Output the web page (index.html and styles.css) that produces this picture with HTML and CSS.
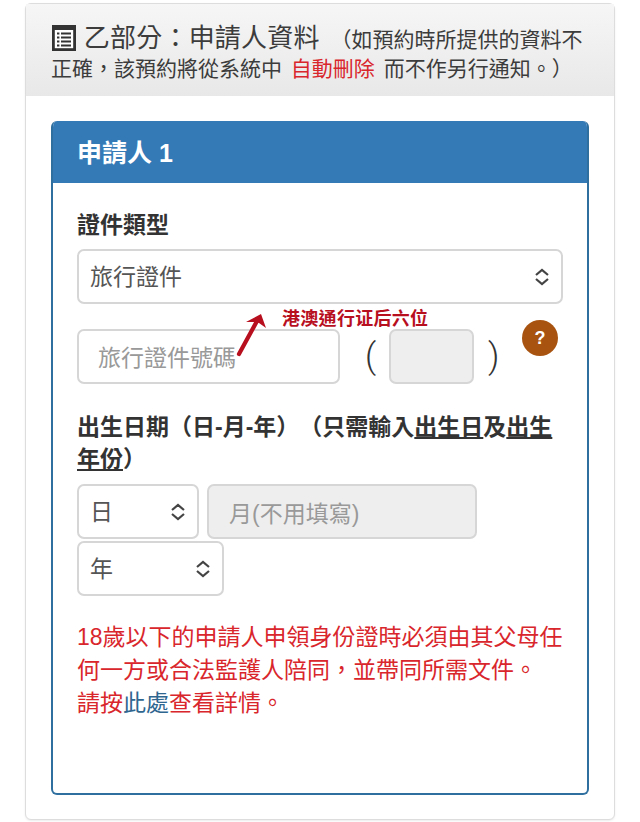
FILE: index.html
```html
<!DOCTYPE html>
<html lang="zh-Hant">
<head>
  <meta charset="UTF-8">
  <meta name="viewport" content="width=device-width, initial-scale=1.0">
  <title>申請人資料</title>
  <link rel="stylesheet" href="styles.css">
</head>
<body>
  <div class="section">
    <!-- 乙部分 heading -->
    <div class="section-head">
      <svg class="list-icon" viewBox="0 0 24 26" aria-hidden="true">
        <rect x="1.4" y="1.4" width="21.2" height="23.2" fill="#fff" stroke="#333" stroke-width="2.8"/>
        <rect x="1" y="1" width="22" height="4" fill="#333"/>
        <path d="M5 8.5h2.4M9 8.5h10M5 12.5h2.4M9 12.5h10M5 16.5h2.4M9 16.5h10M5 20.5h2.4M9 20.5h10" stroke="#333" stroke-width="1.8" fill="none"/>
      </svg>
      <span class="section-title">乙部分：申請人資料</span>
      <span class="section-note">（如預約時所提供的資料不正確，該預約將從系統中 <span class="warn">自動刪除</span> 而不作另行通知。）</span>
    </div>

    <!-- 申請人 panel -->
    <div class="panel">
      <div class="panel-head">申請人 1</div>
      <div class="panel-body">
        <div class="field-label">證件類型</div>
        <div class="control select full">
          <span>旅行證件</span>
          <svg class="updown" viewBox="0 0 16 18" aria-hidden="true"><path d="M2 7l6-5 6 5M2 11l6 5 6-5"/></svg>
        </div>

        <div class="id-row">
          <input class="control id-input" type="text" placeholder="旅行證件號碼">
          <span class="paren open">(</span>
          <input class="control check-digit" type="text" disabled>
          <span class="paren close">)</span>
          <span class="help">?</span>
        </div>

        <!-- annotation drawn on top of the screenshot -->
        <span class="note-text">港澳通行证后六位</span>
        <svg class="note-arrow" viewBox="0 0 36 50" aria-hidden="true">
          <path d="M5 45L23 12" stroke="#b80f1f" stroke-width="4.2" stroke-linecap="round" fill="none"/>
          <path d="M27 5L12 13l8 0 5 1 7 5z" fill="#b80f1f"/>
        </svg>

        <div class="field-label date-label">出生日期（日-月-年）（只需輸入<u>出生日</u>及<u>出生年份</u>）</div>
        <div class="date-row">
          <div class="control select day">
            <span>日</span>
            <svg class="updown" viewBox="0 0 16 18" aria-hidden="true"><path d="M2 7l6-5 6 5M2 11l6 5 6-5"/></svg>
          </div>
          <input class="control month" type="text" placeholder="月(不用填寫)" disabled>
          <div class="control select year">
            <span>年</span>
            <svg class="updown" viewBox="0 0 16 18" aria-hidden="true"><path d="M2 7l6-5 6 5M2 11l6 5 6-5"/></svg>
          </div>
        </div>

        <p class="notice">18歲以下的申請人申領身份證時必須由其父母任何一方或合法監護人陪同，並帶同所需文件。<br>請按<a href="#">此處</a>查看詳情。</p>
      </div>
    </div>
  </div>
</body>
</html>
```

FILE: styles.css
```css
* {
  box-sizing: border-box;
}

body {
  font-family: "Liberation Sans", "Noto Sans CJK SC", "Noto Sans CJK TC", sans-serif;
  margin: 0;
  padding: 3px 25px 2px;
  background: #fff;
  color: #333;
  height: 822px;
  overflow: hidden;
  text-spacing-trim: space-all;
}

.section {
  height: 817px;
  border: 1px solid #ddd;
  border-radius: 6px;
  box-shadow: 0 1px 2px rgba(0, 0, 0, 0.08);
  background: #fff;
}

.section-head {
  height: 92px;
  padding: 21px 25px 0;
  background: linear-gradient(#f6f6f6, #e8e8e8);
  font-size: 21px;
  line-height: 29px;
  color: #3c3c3c;
}

.list-icon {
  width: 24px;
  height: 26px;
  vertical-align: -4px;
  margin: 0 2px 0 1px;
}

.section-title {
  font-size: 26px;
  line-height: 26px;
  letter-spacing: 0.2px;
}

.section-note {
  margin-left: 5px;
  word-spacing: 3px;
}

.warn {
  color: #d9262c;
}

.panel {
  height: 674px;
  margin: 25px 25px 0;
  border: 2px solid #2f6f9f;
  border-top: 0;
  border-radius: 6px;
  overflow: hidden;
}

.panel-head {
  height: 62px;
  margin: 0 -2px;
  padding: 0 26px;
  background: #337ab7;
  color: #fff;
  font-size: 25px;
  font-weight: bold;
  line-height: 65px;
}

.panel-body {
  position: relative;
  padding: 26px 24px 0;
}

.field-label {
  font-size: 23px;
  font-weight: bold;
  line-height: 32px;
  color: #333;
}

.control {
  height: 55px;
  border: 2px solid #d6d6d6;
  border-radius: 7px;
  background: #fff;
  font-family: inherit;
  font-size: 23px;
  color: #555;
}

.select {
  display: flex;
  justify-content: space-between;
  align-items: center;
  padding: 0 11px 3px;
}

.full {
  margin-top: 8px;
}

.updown {
  width: 16px;
  height: 18px;
  margin-top: 3px;
}

.updown path {
  fill: none;
  stroke: #444;
  stroke-width: 2.2;
}

.id-row {
  display: flex;
  align-items: flex-start;
  margin-top: 16px;
}

.id-input {
  width: 263px;
  margin-top: 9px;
  padding: 4px 19px 0;
}

input::placeholder {
  color: #999;
  opacity: 1;
}

input:disabled {
  background: #eee;
}

.paren {
  font-family: Roboto, sans-serif;
  font-size: 35px;
  font-weight: 300;
  line-height: 55px;
  margin-top: 9px;
  color: #333;
}

.open {
  margin-left: 25px;
  width: 24px;
}

.close {
  margin-left: 14px;
  width: 34px;
}

.check-digit {
  width: 85px;
  margin-top: 9px;
}

.help {
  width: 36px;
  height: 36px;
  border-radius: 50%;
  background: #a8530f;
  color: #fff;
  font-size: 18px;
  font-weight: bold;
  line-height: 36px;
  text-align: center;
}

.note-text {
  position: absolute;
  left: 229px;
  top: 124px;
  font-size: 18px;
  font-weight: bold;
  letter-spacing: 0.3px;
  line-height: 24px;
  color: #b80f1f;
}

.note-arrow {
  position: absolute;
  left: 181px;
  top: 126px;
  width: 36px;
  height: 50px;
}

.date-label {
  margin-top: 27px;
}

.date-row {
  display: flex;
  flex-wrap: wrap;
  gap: 2px 8px;
  margin-top: 9px;
}

.day {
  width: 122px;
}

.month {
  width: 270px;
  padding: 5px 20px 0;
}

.year {
  width: 147px;
}

.notice {
  margin: 25px 0 0;
  font-size: 23px;
  line-height: 33px;
  color: #d9262c;
}

.notice a {
  color: #2f6690;
  text-decoration: none;
}
```
